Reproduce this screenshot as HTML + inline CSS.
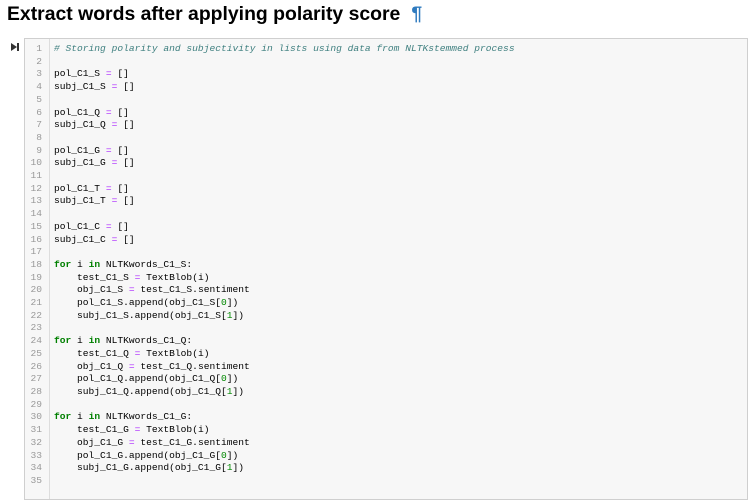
<!DOCTYPE html><html><head><style>
body{margin:0;background:#fff;width:750px;height:483px;overflow:hidden;position:relative;font-family:"Liberation Sans",sans-serif}
h1{position:absolute;left:7px;top:3px;margin:0;font-size:19.4px;font-weight:bold;color:#000;white-space:nowrap}
h1 span{color:#2f7bbf;margin-left:11px;font-weight:bold}
.run{position:absolute;left:11px;top:43px;width:0;height:0;border-left:6px solid #333;border-top:4px solid transparent;border-bottom:4px solid transparent}
.run:after{content:"";position:absolute;left:0;top:-4px;width:2px;height:8px;background:#333}
.box{position:absolute;left:24px;top:38px;width:722px;height:460px;background:#f7f7f7;border:1px solid #cfcfcf}
.gut{position:absolute;left:0;top:0;width:24px;height:100%;border-right:1px solid #ddd}
pre{margin:0;position:absolute;top:4px;font-family:"Liberation Mono",monospace;font-size:9.6px;line-height:12.7px}
.n{left:0;width:17px;text-align:right;color:#999}
.c{left:29px;color:#000}
.cm{color:#408080;font-style:italic}.k{color:#008000;font-weight:bold}.o{color:#aa22ff}.d{color:#080}
</style></head><body>
<h1>Extract words after applying polarity score<span>¶</span></h1>
<div class="run"></div>
<div class="box"><div class="gut"></div>
<pre class="n">1
2
3
4
5
6
7
8
9
10
11
12
13
14
15
16
17
18
19
20
21
22
23
24
25
26
27
28
29
30
31
32
33
34
35</pre>
<pre class="c"><span class="cm"># Storing polarity and subjectivity in lists using data from NLTKstemmed process</span>

pol_C1_S <span class="o">=</span> []
subj_C1_S <span class="o">=</span> []

pol_C1_Q <span class="o">=</span> []
subj_C1_Q <span class="o">=</span> []

pol_C1_G <span class="o">=</span> []
subj_C1_G <span class="o">=</span> []

pol_C1_T <span class="o">=</span> []
subj_C1_T <span class="o">=</span> []

pol_C1_C <span class="o">=</span> []
subj_C1_C <span class="o">=</span> []

<span class="k">for</span> i <span class="k">in</span> NLTKwords_C1_S:
    test_C1_S <span class="o">=</span> TextBlob(i)
    obj_C1_S <span class="o">=</span> test_C1_S.sentiment
    pol_C1_S.append(obj_C1_S[<span class="d">0</span>])
    subj_C1_S.append(obj_C1_S[<span class="d">1</span>])

<span class="k">for</span> i <span class="k">in</span> NLTKwords_C1_Q:
    test_C1_Q <span class="o">=</span> TextBlob(i)
    obj_C1_Q <span class="o">=</span> test_C1_Q.sentiment
    pol_C1_Q.append(obj_C1_Q[<span class="d">0</span>])
    subj_C1_Q.append(obj_C1_Q[<span class="d">1</span>])

<span class="k">for</span> i <span class="k">in</span> NLTKwords_C1_G:
    test_C1_G <span class="o">=</span> TextBlob(i)
    obj_C1_G <span class="o">=</span> test_C1_G.sentiment
    pol_C1_G.append(obj_C1_G[<span class="d">0</span>])
    subj_C1_G.append(obj_C1_G[<span class="d">1</span>])
</pre></div>
</body></html>
